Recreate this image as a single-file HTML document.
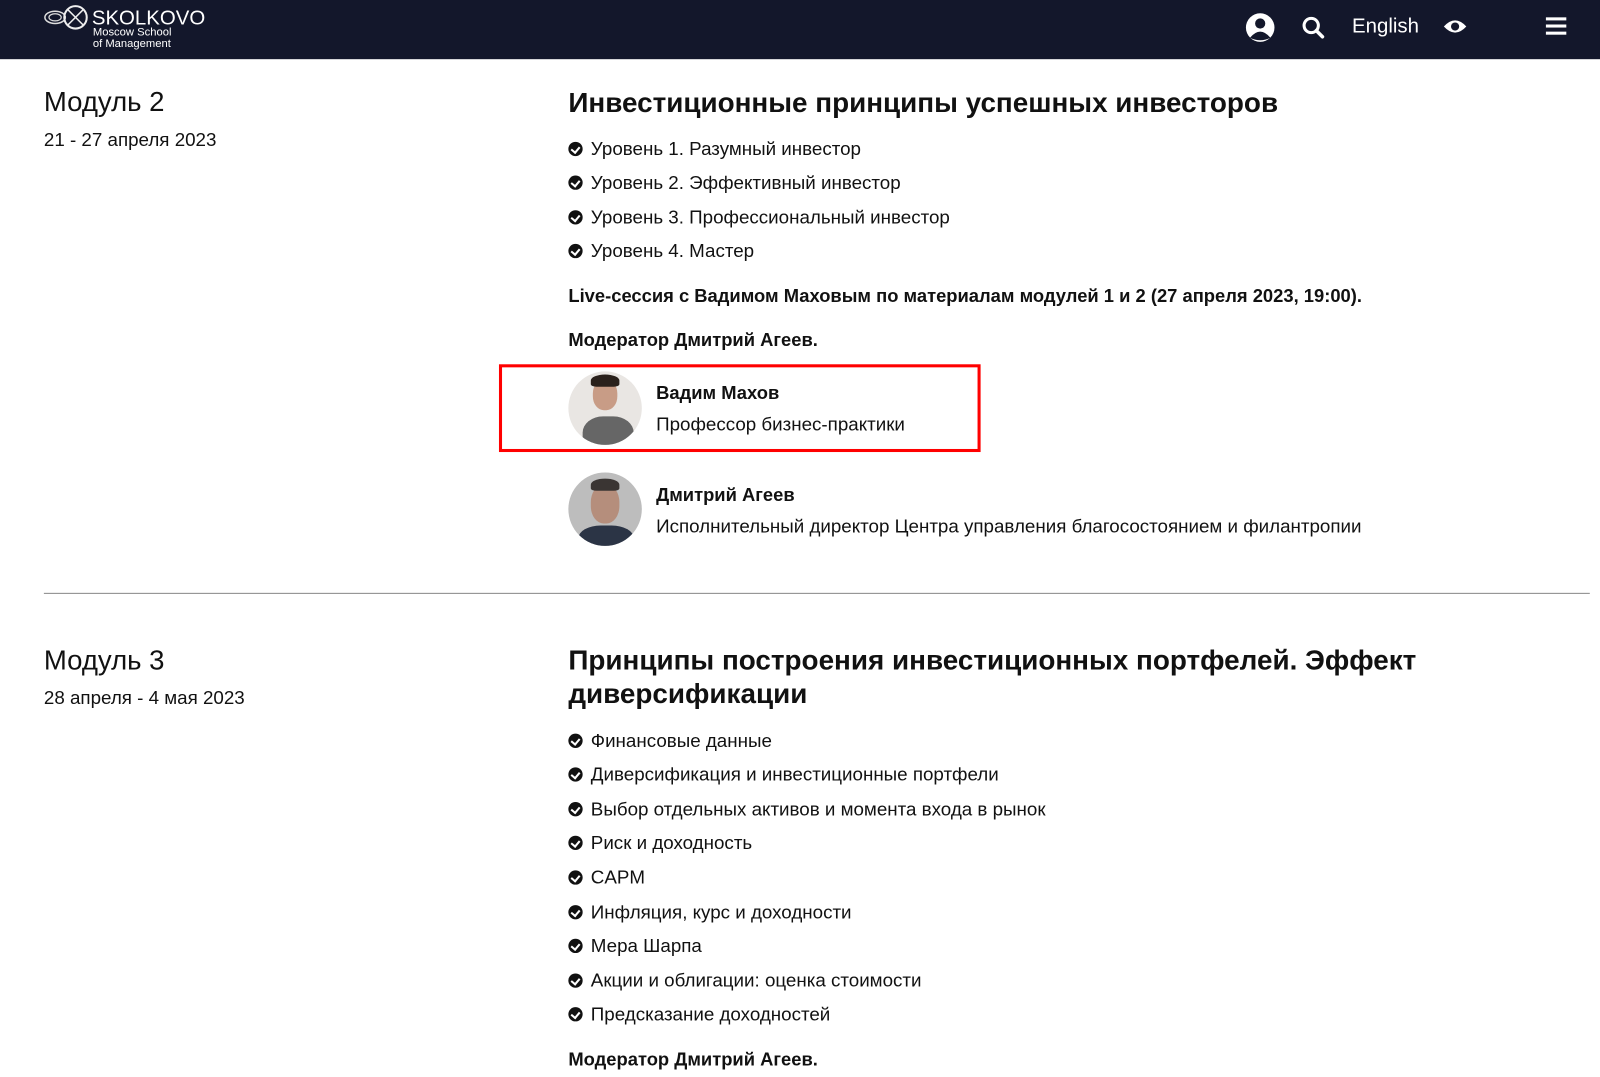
<!DOCTYPE html>
<html><head><meta charset="utf-8"><style>
*{margin:0;padding:0;box-sizing:border-box}
html,body{width:1600px;height:1077px;overflow:hidden;background:#fff}
body{font-family:"Liberation Sans",sans-serif;color:#111;position:relative}
#w{position:absolute;left:0;top:0;width:1600px;height:1077px;transform:scale(1.0204);transform-origin:0 0}
.a{position:absolute;white-space:nowrap;line-height:24px}
.hd{position:absolute;left:0;top:0;width:1600px;height:58px;background:#13172b}
.li{font-size:18.4px;padding-left:22px}
.li:before{content:"";position:absolute;left:0;top:5px;width:14px;height:14px;border-radius:50%;background:#111}
.li:after{content:"";position:absolute;left:4px;top:8px;width:4px;height:6px;border:solid #fff;border-width:0 2px 2px 0;transform:rotate(40deg)}
.h2{font-size:27.3px;font-weight:bold;line-height:33px}
.mod{font-size:27px;line-height:32px}
.dt{font-size:18.4px}
.b{font-size:18px;font-weight:bold}
.av{position:absolute;width:72px;height:72px;border-radius:50%;overflow:hidden}
</style></head><body><div id="w">
<div class="hd">
<svg style="position:absolute;left:42px;top:3px" width="48" height="30" viewBox="0 0 48 30"><ellipse cx="12" cy="14" rx="10" ry="6" fill="none" stroke="#ddd" stroke-width="1.5"/><ellipse cx="12" cy="14" rx="6" ry="3.5" fill="none" stroke="#ddd" stroke-width="1.2"/><circle cx="32" cy="14" r="11" fill="none" stroke="#eee" stroke-width="2"/><path d="M24 6 L40 22 M40 6 L24 22" stroke="#eee" stroke-width="1.5"/></svg>
<div class="a" style="left:90px;top:7px;color:#fff;font-size:20px;line-height:22px">SKOLKOVO</div>
<div class="a" style="left:91px;top:27px;color:#fff;font-size:11px;line-height:11px">Moscow School<br>of Management</div>
<svg style="position:absolute;left:1220px;top:12px" width="30" height="30" viewBox="0 0 30 30"><circle cx="15" cy="15" r="14" fill="#fff"/><circle cx="15" cy="11" r="5" fill="#13172b"/><path d="M5 25 Q15 13 25 25 Q15 30 5 25Z" fill="#13172b"/></svg>
<svg style="position:absolute;left:1275px;top:15px" width="26" height="24" viewBox="0 0 26 24"><circle cx="10" cy="10" r="7" fill="none" stroke="#fff" stroke-width="3"/><path d="M15 15 L21 21" stroke="#fff" stroke-width="3.5" stroke-linecap="round"/></svg>
<div class="a" style="left:1325px;top:14px;color:#fff;font-size:20px">English</div>
<svg style="position:absolute;left:1414px;top:17px" width="24" height="18" viewBox="0 0 24 18"><path d="M1 9 Q12 -3 23 9 Q12 21 1 9Z" fill="#fff"/><circle cx="12" cy="9" r="4" fill="#13172b"/></svg>
<div style="position:absolute;left:1515px;top:17px;width:20px;height:3px;background:#fff;box-shadow:0 7px 0 #fff,0 14px 0 #fff"></div>
</div>

<div class="a mod" style="left:43px;top:84px">Модуль 2</div>
<div class="a dt" style="left:43px;top:125px">21 - 27 апреля 2023</div>
<div class="a h2" style="left:557px;top:84px">Инвестиционные принципы успешных инвесторов</div>
<div class="a li" style="left:557px;top:134px">Уровень 1. Разумный инвестор</div>
<div class="a li" style="left:557px;top:167px">Уровень 2. Эффективный инвестор</div>
<div class="a li" style="left:557px;top:201px">Уровень 3. Профессиональный инвестор</div>
<div class="a li" style="left:557px;top:234px">Уровень 4. Мастер</div>
<div class="a b" style="left:557px;top:278px">Live-сессия с Вадимом Маховым по материалам модулей 1 и 2 (27 апреля 2023, 19:00).</div>
<div class="a b" style="left:557px;top:321px">Модератор Дмитрий Агеев.</div>

<div style="position:absolute;left:489px;top:357px;width:472px;height:86px;border:3px solid #f00"></div>
<div class="av" style="left:557px;top:364px;background:#e9e6e3"><div style="position:absolute;left:14px;top:44px;width:50px;height:40px;border-radius:40% 40% 0 0;background:#666"></div><div style="position:absolute;left:24px;top:8px;width:24px;height:30px;border-radius:45%;background:#c89c86"></div><div style="position:absolute;left:22px;top:3px;width:28px;height:12px;border-radius:50% 50% 20% 20%;background:#2a211c"></div></div>
<div class="a b" style="left:643px;top:373px">Вадим Махов</div>
<div class="a dt" style="left:643px;top:404px">Профессор бизнес-практики</div>

<div class="av" style="left:557px;top:463px;background:#bdbdbd"><div style="position:absolute;left:10px;top:52px;width:54px;height:30px;border-radius:40% 40% 0 0;background:#2b3445"></div><div style="position:absolute;left:22px;top:12px;width:28px;height:38px;border-radius:45%;background:#b58e7c"></div><div style="position:absolute;left:22px;top:6px;width:28px;height:12px;border-radius:50% 50% 20% 20%;background:#3a3533"></div></div>
<div class="a b" style="left:643px;top:473px">Дмитрий Агеев</div>
<div class="a dt" style="left:643px;top:504px">Исполнительный директор Центра управления благосостоянием и филантропии</div>

<div style="position:absolute;left:43px;top:581px;width:1515px;height:1px;background:#888"></div>

<div class="a mod" style="left:43px;top:631px">Модуль 3</div>
<div class="a dt" style="left:43px;top:672px">28 апреля - 4 мая 2023</div>
<div class="a h2" style="left:557px;top:630px;line-height:33px">Принципы построения инвестиционных портфелей. Эффект<br>диверсификации</div>
<div class="a li" style="left:557px;top:714px">Финансовые данные</div>
<div class="a li" style="left:557px;top:747px">Диверсификация и инвестиционные портфели</div>
<div class="a li" style="left:557px;top:781px">Выбор отдельных активов и момента входа в рынок</div>
<div class="a li" style="left:557px;top:814px">Риск и доходность</div>
<div class="a li" style="left:557px;top:848px">CAPM</div>
<div class="a li" style="left:557px;top:882px">Инфляция, курс и доходности</div>
<div class="a li" style="left:557px;top:915px">Мера Шарпа</div>
<div class="a li" style="left:557px;top:949px">Акции и облигации: оценка стоимости</div>
<div class="a li" style="left:557px;top:982px">Предсказание доходностей</div>
<div class="a b" style="left:557px;top:1026px">Модератор Дмитрий Агеев.</div>
</div></body></html>
